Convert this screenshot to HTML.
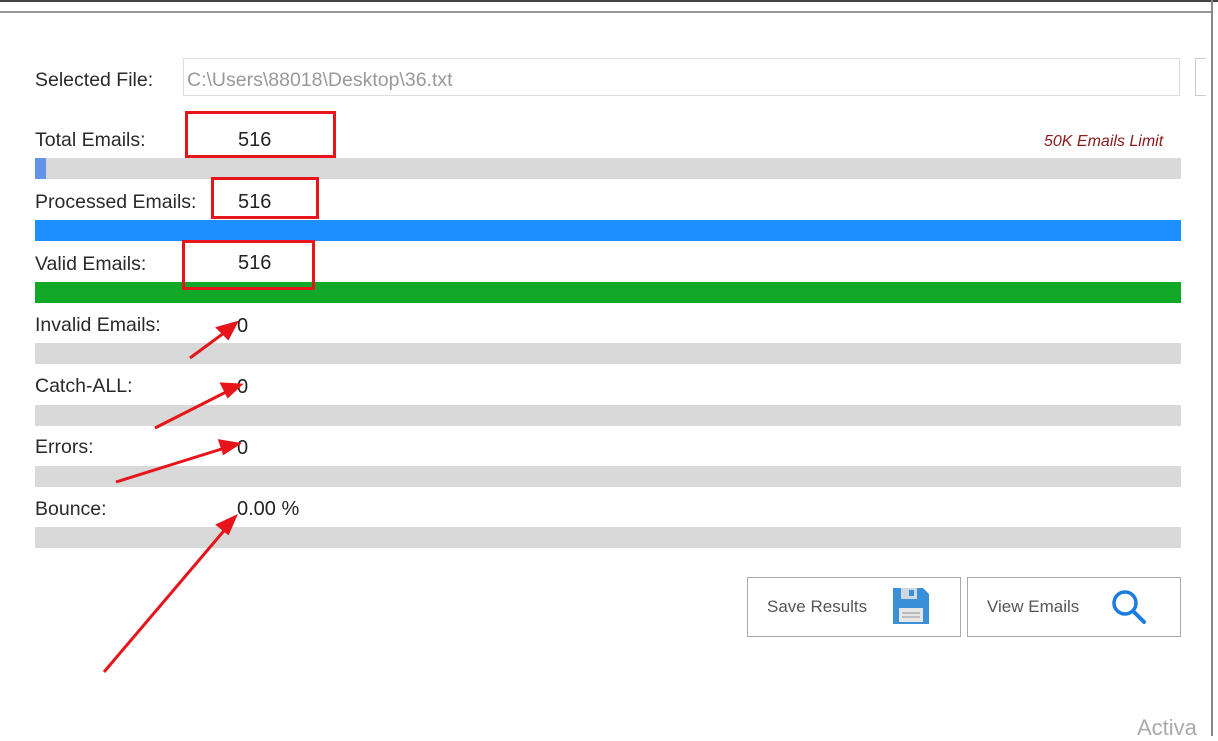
<!DOCTYPE html>
<html><head><style>
body{margin:0;width:1218px;height:736px;background:#fff;position:relative;overflow:hidden;font-family:"Liberation Sans",sans-serif;color:#333}
.a{position:absolute}
.lbl{font-size:19.5px;color:#2a2a2a}
.bar{position:absolute;left:35px;width:1146px;height:21px;background:#d9d9d9}
.box{position:absolute;border:3px solid #e8141b;box-sizing:border-box;z-index:2}
.num{font-size:20px;color:#222}
</style></head><body>
<div class="a" style="left:0;top:0;width:1218px;height:2px;background:#444"></div>
<div class="a" style="left:0;top:11px;width:1212px;height:2px;background:#999"></div>
<div class="a" style="left:1211px;top:0;width:2px;height:736px;background:#888"></div>
<div class="a" style="left:1195px;top:58px;width:10px;height:36px;border:1px solid #ccc;border-right:none"></div>

<div class="a lbl" style="left:35px;top:69px">Selected File:</div>
<div class="a" style="left:183px;top:58px;width:997px;height:38px;border:1px solid #ddd;box-sizing:border-box"></div>
<div class="a" style="left:187px;top:69px;font-size:19.5px;color:#999">C:\Users\88018\Desktop\36.txt</div>

<div class="a lbl" style="left:35px;top:129px">Total Emails:</div>
<div class="box" style="left:185px;top:111px;width:151px;height:47px"></div>
<div class="a num" style="left:238px;top:129px">516</div>
<div class="a" style="left:1044px;top:133px;font-size:16px;font-style:italic;color:#8b1a1a">50K Emails Limit</div>
<div class="bar" style="top:158px"></div>
<div class="a" style="left:35px;top:158px;width:11px;height:21px;background:#6494e8"></div>

<div class="a lbl" style="left:35px;top:191px">Processed Emails:</div>
<div class="box" style="left:211px;top:177px;width:108px;height:42px"></div>
<div class="a num" style="left:238px;top:191px">516</div>
<div class="bar" style="top:220px;background:#1e8fff"></div>

<div class="a lbl" style="left:35px;top:253px">Valid Emails:</div>
<div class="box" style="left:182px;top:240px;width:133px;height:50px"></div>
<div class="a num" style="left:238px;top:252px">516</div>
<div class="bar" style="top:282px;background:#10a826"></div>

<div class="a lbl" style="left:35px;top:314px">Invalid Emails:</div>
<div class="a num" style="left:237px;top:315px">0</div>
<div class="bar" style="top:343px"></div>
<div class="a lbl" style="left:35px;top:375px">Catch-ALL:</div>
<div class="a num" style="left:237px;top:376px">0</div>
<div class="bar" style="top:405px"></div>
<div class="a lbl" style="left:35px;top:436px">Errors:</div>
<div class="a num" style="left:237px;top:437px">0</div>
<div class="bar" style="top:466px"></div>
<div class="a lbl" style="left:35px;top:498px">Bounce:</div>
<div class="a num" style="left:237px;top:498px">0.00 %</div>
<div class="bar" style="top:527px"></div>

<div class="a" style="left:747px;top:577px;width:214px;height:60px;border:1px solid #aaa;box-sizing:border-box"></div>
<div class="a" style="left:767px;top:597px;font-size:17px;color:#555">Save Results</div>
<svg class="a" style="left:891px;top:586px" width="40" height="40" viewBox="0 0 40 40">
<path d="M2 2h30l6 6v30H2z" fill="#3a90d8"/><rect x="10" y="2" width="16" height="11" fill="#cfd8e0"/><rect x="18" y="4" width="5" height="6" fill="#3a90d8"/><rect x="8" y="22" width="24" height="14" fill="#e6e6e6"/><rect x="11" y="26" width="18" height="2" fill="#bbb"/><rect x="11" y="30" width="18" height="2" fill="#bbb"/></svg>
<div class="a" style="left:967px;top:577px;width:214px;height:60px;border:1px solid #aaa;box-sizing:border-box"></div>
<div class="a" style="left:987px;top:597px;font-size:17px;color:#555">View Emails</div>
<svg class="a" style="left:1110px;top:588px" width="38" height="38" viewBox="0 0 38 38"><circle cx="15" cy="15" r="11" fill="none" stroke="#1a7de0" stroke-width="3.5"/><path d="M23 23l11 11" stroke="#1a7de0" stroke-width="4" stroke-linecap="round"/></svg>

<svg class="a" style="left:0;top:0" width="1218" height="736">
<g stroke="#e8141b" stroke-width="3" fill="#e8141b">
<line x1="190" y1="358" x2="228" y2="330"/><polygon points="236,323 218,328 228,338"/>
<line x1="155" y1="428" x2="230" y2="390"/><polygon points="240,385 222,384 228,396"/>
<line x1="116" y1="482" x2="228" y2="447"/><polygon points="238,444 220,441 224,453"/>
<line x1="104" y1="672" x2="228" y2="526"/><polygon points="235,517 218,525 228,533"/>
</g></svg>
<div class="a" style="left:1137px;top:715px;font-size:22px;color:#aaa">Activa</div>
</body></html>
